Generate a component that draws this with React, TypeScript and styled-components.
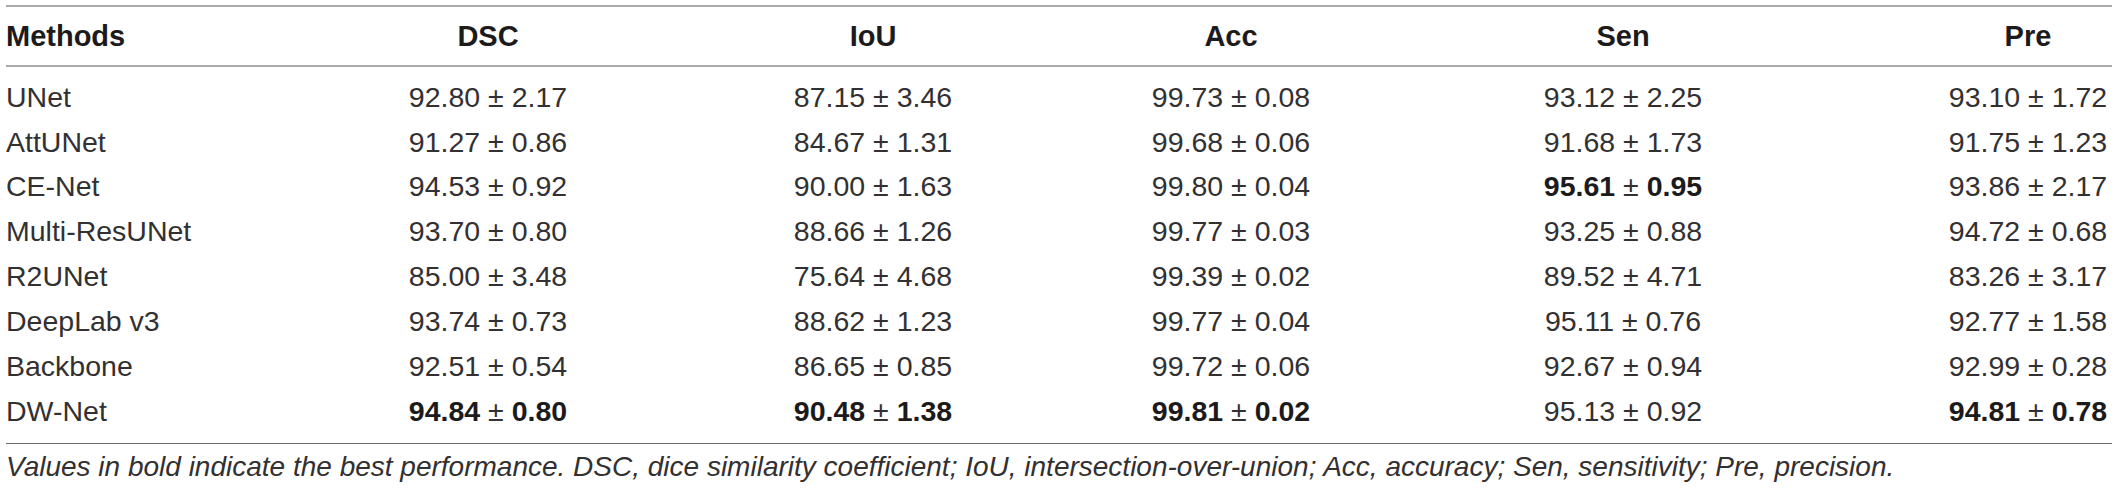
import React from "react";
import styled, { createGlobalStyle } from "styled-components";

const GlobalStyle = createGlobalStyle`
  html, body {
    margin: 0;
    padding: 0;
    background: #ffffff;
  }
  body {
    font-family: "Liberation Sans", Arial, Helvetica, sans-serif;
    color: #231f20;
  }
`;

const Page = styled.div`
  width: 2118px;
  padding: 5px 6px 0 6px;
  box-sizing: border-box;
`;

const Table = styled.div`
  width: 2106px;
  display: flex;
  flex-direction: column;
`;

/* name column, then each value column (168px) preceded by its gutter */
const gridCols = `
  display: grid;
  grid-template-columns: 398px 168px 217px 168px 190px 168px 224px 168px 237px 168px;
`;

/* grid line index of each column: name, DSC, IoU, Acc, Sen, Pre */
const colIndex = [1, 2, 4, 6, 8, 10];

const HeaderRow = styled.div`
  ${gridCols}
  border-top: 2px solid #a9a9a9;
  border-bottom: 2px solid #a9a9a9;
  height: 62px;
  box-sizing: border-box;
  padding-bottom: 2px;
`;

const HeadCell = styled.div<{ $col: number; $left?: boolean }>`
  grid-column: ${(p) => p.$col};
  font-weight: 700;
  font-size: 29px;
  line-height: 58px;
  color: #1d1a1b;
  white-space: nowrap;
  display: flex;
  justify-content: ${(p) => (p.$left ? "flex-start" : "center")};
`;

const Body = styled.div`
  padding: 7.7px 0 9.3px 0;
  border-bottom: 1px solid #6b6b6b;
`;

const Row = styled.div`
  ${gridCols}
  height: 44.86px;
`;

const Cell = styled.div<{ $col: number; $left?: boolean }>`
  grid-column: ${(p) => p.$col};
  font-size: 28.5px;
  line-height: 44.86px;
  white-space: nowrap;
  color: #333031;
  display: flex;
  min-width: 0;
  justify-content: ${(p) => (p.$left ? "flex-start" : "center")};
`;

const Strong = styled.span`
  font-weight: 700;
  color: #1d1a1b;
`;

const Pm = styled.span`
  white-space: pre;
`;

const Caption = styled.p`
  margin: 6.5px 0 0 0;
  font-style: italic;
  font-size: 28px;
  line-height: 34px;
  color: #333031;
  white-space: nowrap;
`;

type Value = { v: string; b?: boolean };
type RowData = { name: string; vals: Value[] };

const v = (s: string, b = false): Value => ({ v: s, b });

const rows: RowData[] = [
  { name: "UNet", vals: [v("92.80 ± 2.17"), v("87.15 ± 3.46"), v("99.73 ± 0.08"), v("93.12 ± 2.25"), v("93.10 ± 1.72")] },
  { name: "AttUNet", vals: [v("91.27 ± 0.86"), v("84.67 ± 1.31"), v("99.68 ± 0.06"), v("91.68 ± 1.73"), v("91.75 ± 1.23")] },
  { name: "CE-Net", vals: [v("94.53 ± 0.92"), v("90.00 ± 1.63"), v("99.80 ± 0.04"), v("95.61 ± 0.95", true), v("93.86 ± 2.17")] },
  { name: "Multi-ResUNet", vals: [v("93.70 ± 0.80"), v("88.66 ± 1.26"), v("99.77 ± 0.03"), v("93.25 ± 0.88"), v("94.72 ± 0.68")] },
  { name: "R2UNet", vals: [v("85.00 ± 3.48"), v("75.64 ± 4.68"), v("99.39 ± 0.02"), v("89.52 ± 4.71"), v("83.26 ± 3.17")] },
  { name: "DeepLab v3", vals: [v("93.74 ± 0.73"), v("88.62 ± 1.23"), v("99.77 ± 0.04"), v("95.11 ± 0.76"), v("92.77 ± 1.58")] },
  { name: "Backbone", vals: [v("92.51 ± 0.54"), v("86.65 ± 0.85"), v("99.72 ± 0.06"), v("92.67 ± 0.94"), v("92.99 ± 0.28")] },
  { name: "DW-Net", vals: [v("94.84 ± 0.80", true), v("90.48 ± 1.38", true), v("99.81 ± 0.02", true), v("95.13 ± 0.92"), v("94.81 ± 0.78", true)] },
];

const headers = ["DSC", "IoU", "Acc", "Sen", "Pre"];

const ValueText: React.FC<{ value: Value }> = ({ value }) => {
  if (!value.b) return <span>{value.v}</span>;
  const [a, b] = value.v.split(" ± ");
  return (
    <span>
      <Strong>{a}</Strong>
      <Pm>{" ± "}</Pm>
      <Strong>{b}</Strong>
    </span>
  );
};

export default function App() {
  return (
    <>
      <GlobalStyle />
      <Page>
        <Table>
          <HeaderRow>
            <HeadCell $col={colIndex[0]} $left>
              Methods
            </HeadCell>
            {headers.map((h, i) => (
              <HeadCell key={h} $col={colIndex[i + 1]}>
                {h}
              </HeadCell>
            ))}
          </HeaderRow>
          <Body>
            {rows.map((r) => (
              <Row key={r.name}>
                <Cell $col={colIndex[0]} $left>
                  {r.name}
                </Cell>
                {r.vals.map((val, i) => (
                  <Cell key={i} $col={colIndex[i + 1]}>
                    <ValueText value={val} />
                  </Cell>
                ))}
              </Row>
            ))}
          </Body>
        </Table>
        <Caption>
          Values in bold indicate the best performance. DSC, dice similarity coefficient; IoU, intersection-over-union; Acc, accuracy; Sen, sensitivity; Pre, precision.
        </Caption>
      </Page>
    </>
  );
}
